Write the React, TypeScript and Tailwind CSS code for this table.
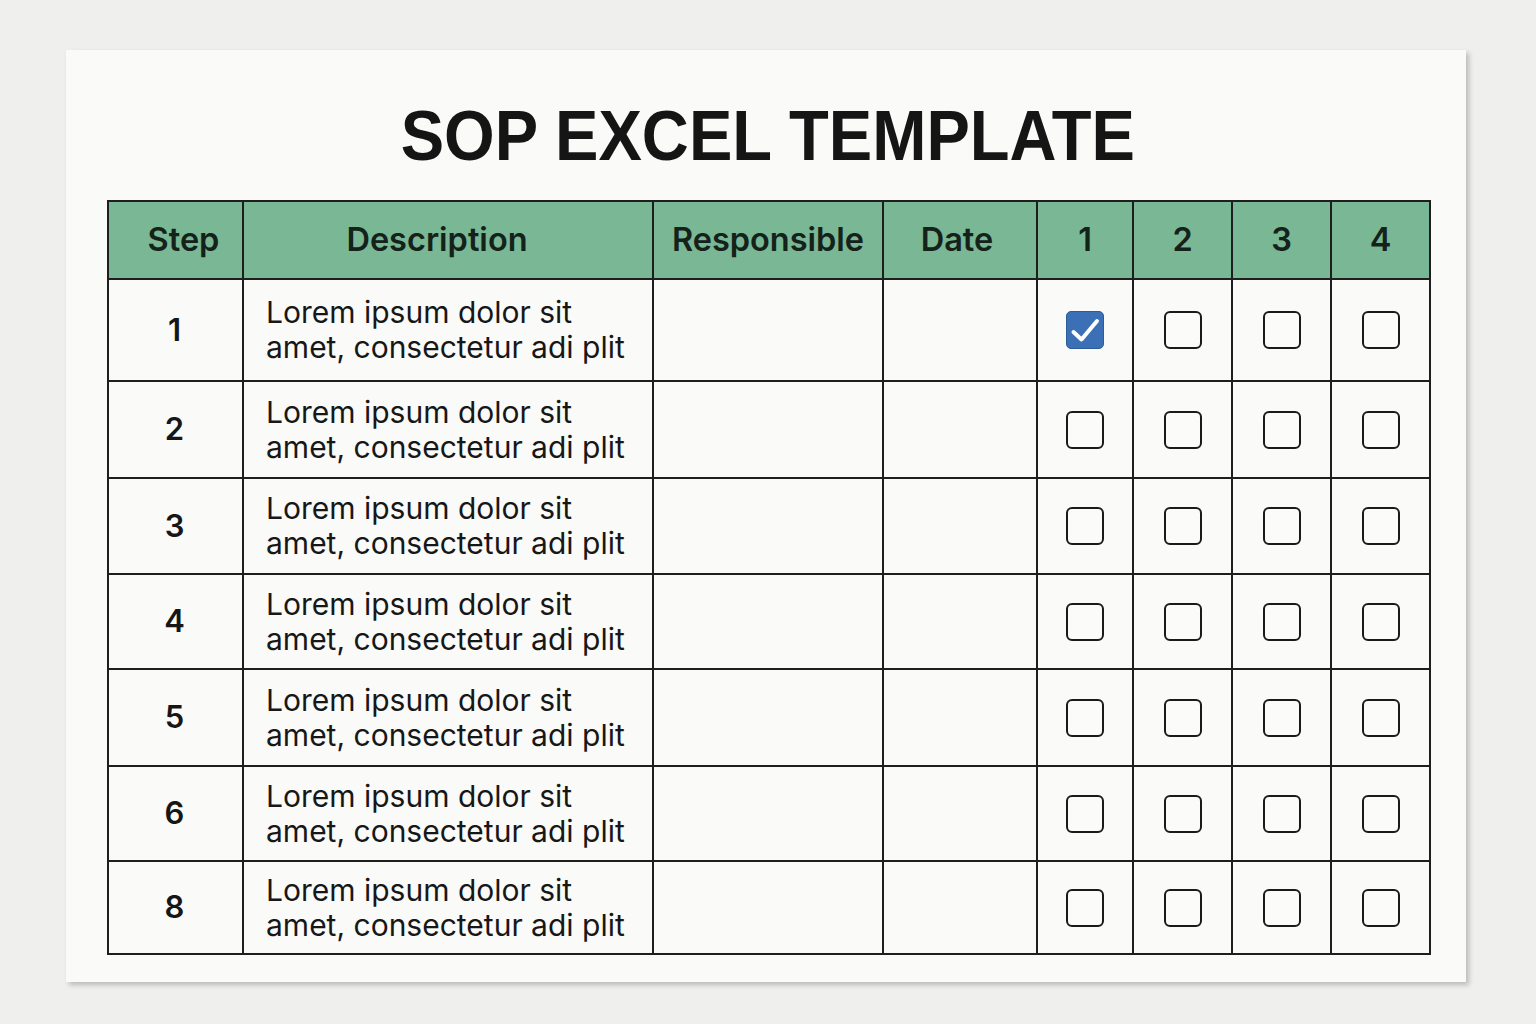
import React from "react";

const rows = [
  { step: "1", h: 102, checked: [true, false, false, false] },
  { step: "2", h: 97, checked: [false, false, false, false] },
  { step: "3", h: 96, checked: [false, false, false, false] },
  { step: "4", h: 95, checked: [false, false, false, false] },
  { step: "5", h: 97, checked: [false, false, false, false] },
  { step: "6", h: 95, checked: [false, false, false, false] },
  { step: "8", h: 93, checked: [false, false, false, false] },
];

function Box({ checked }: { checked: boolean }) {
  if (checked) {
    return (
      <div className="w-[38px] h-[38px] rounded-[5px] bg-[#3b70b6] border border-[#2d5c9a] flex items-center justify-center mx-auto">
        <svg width="38" height="38" viewBox="0 0 38 38" fill="none" className="shrink-0">
          <path d="M7.5 21 L15.5 28.5 L31 10" stroke="#ffffff" strokeWidth="4" strokeLinecap="round" strokeLinejoin="round" />
        </svg>
      </div>
    );
  }
  return <div className="w-[38px] h-[38px] rounded-[6px] border-[2.5px] border-[#1a1a1a] bg-[#fbfbfa] mx-auto" />;
}

const headers: { t: string; cls: string }[] = [
  { t: "Step", cls: "pl-[16px]" },
  { t: "Description", cls: "pr-[22px]" },
  { t: "Responsible", cls: "" },
  { t: "Date", cls: "pr-[6px]" },
  { t: "1", cls: "" },
  { t: "2", cls: "" },
  { t: "3", cls: "" },
  { t: "4", cls: "" },
];

export default function App() {
  const font = { fontFamily: "Inter, 'Liberation Sans', sans-serif" };
  return (
    <div className="w-[1536px] h-[1024px] bg-[#efefed] pt-[50px] pl-[66px]" style={font}>
      <div className="w-[1400px] h-[932px] bg-[#fafaf8] shadow-[3px_3px_5px_rgba(0,0,0,0.22)] pl-[41px] pt-[48px]">
        <h1 className="w-[1322px] text-center text-[70px] leading-[76px] font-bold text-[#151515]" style={{ fontFamily: "'Liberation Sans', Arial, sans-serif" }}>
          <span className="inline-block scale-x-[0.93] origin-center">SOP EXCEL TEMPLATE</span>
        </h1>
        <table className="mt-[26px] table-fixed border-collapse w-[1322px] border-2 border-[#1e1e1e]">
          <colgroup>
            <col className="w-[135px]" />
            <col className="w-[410px]" />
            <col className="w-[230px]" />
            <col className="w-[154px]" />
            <col className="w-[96px]" />
            <col className="w-[99px]" />
            <col className="w-[99px]" />
            <col className="w-[99px]" />
          </colgroup>
          <thead>
            <tr className="h-[78px] bg-[#79b795]">
              {headers.map((h, i) => (
                <th key={i} className={`border-2 border-[#1e1e1e] text-[32.5px] font-semibold text-[#14221a] text-center align-middle ${h.cls}`}>
                  {h.t}
                </th>
              ))}
            </tr>
          </thead>
          <tbody>
            {rows.map((r) => (
              <tr key={r.step} style={{ height: r.h }}>
                <td className="border-2 border-[#1e1e1e] text-center text-[31px] font-semibold text-[#161616] align-middle pr-[2px]">{r.step}</td>
                <td className="border-2 border-[#1e1e1e] pl-[22px] text-[30px] leading-[35px] text-[#171717] align-middle">
                  Lorem ipsum dolor sit
                  <br />
                  amet, consectetur adi plit
                </td>
                <td className="border-2 border-[#1e1e1e]" />
                <td className="border-2 border-[#1e1e1e]" />
                {r.checked.map((c, i) => (
                  <td key={i} className="border-2 border-[#1e1e1e] align-middle">
                    <Box checked={c} />
                  </td>
                ))}
              </tr>
            ))}
          </tbody>
        </table>
      </div>
    </div>
  );
}
